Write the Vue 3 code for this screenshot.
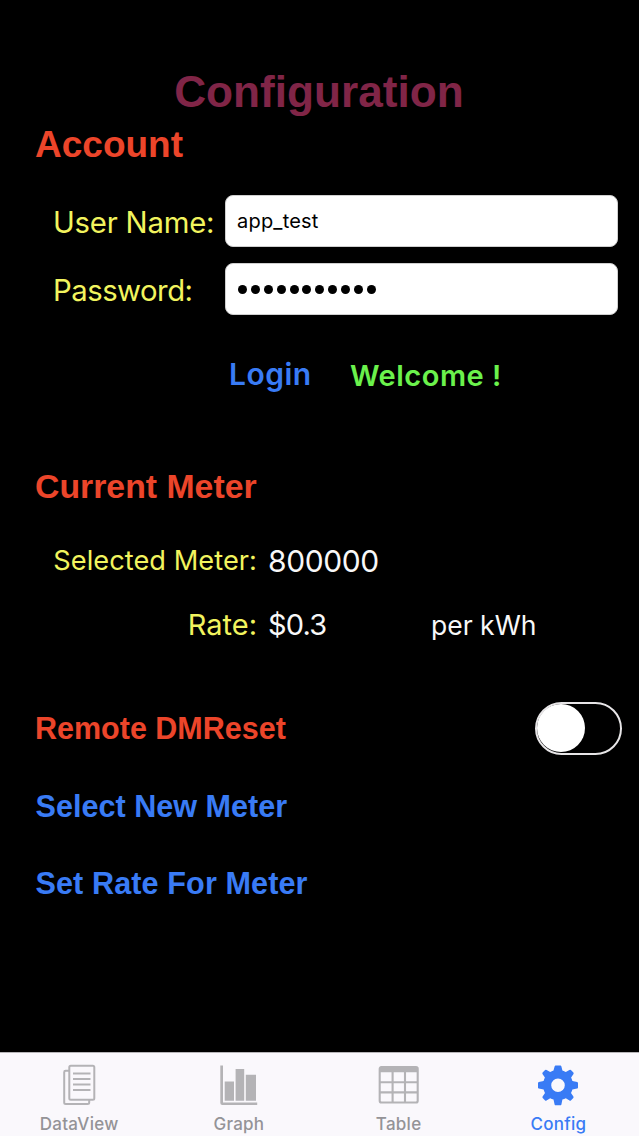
<script setup>
import { ref } from 'vue'

const userName = ref('app_test')
const passwordLength = 11
const remoteReset = ref(false)
const active = ref('Config')
const tabs = ['DataView', 'Graph', 'Table', 'Config']
</script>

<template>
  <div class="screen">
    <main class="content">
      <h1 class="title">Configuration</h1>

      <h2 class="heading account">Account</h2>
      <div class="field-row">
        <span class="label user">User Name:</span>
        <div class="field"><span class="value">{{ userName }}</span></div>
      </div>
      <div class="field-row">
        <span class="label pass">Password:</span>
        <div class="field dots"><i v-for="n in passwordLength" :key="n" class="dot"></i></div>
      </div>
      <div class="login-row">
        <span class="login">Login</span>
        <span class="welcome">Welcome !</span>
      </div>

      <h2 class="heading meter">Current Meter</h2>
      <div class="info-row selected">
        <span class="info-label"><span class="sel-text">Selected Meter:</span></span>
        <span class="number">800000</span>
      </div>
      <div class="info-row rate">
        <span class="info-label"><span class="rate-text">Rate:</span></span>
        <span class="price">$0.3</span>
        <span class="unit">per kWh</span>
      </div>

      <div class="reset-row">
        <h2 class="heading reset">Remote DMReset</h2>
        <div class="switch" :class="{ on: remoteReset }" @click="remoteReset = !remoteReset"><div class="knob"></div></div>
      </div>
      <div class="link select">Select New Meter</div>
      <div class="link set">Set Rate For Meter</div>
    </main>

    <nav class="tabs">
      <div v-for="tab in tabs" :key="tab" class="tab" :class="[{ active: tab === active }, tab.toLowerCase()]" @click="active = tab">
        <svg class="icon" viewBox="0 0 42 42" width="42" height="42">
          <g v-if="tab === 'DataView'" fill="none" stroke="currentColor" stroke-width="2" stroke-linejoin="round">
            <rect x="11.3" y="1.8" width="25" height="34" rx="1.5" />
            <path d="M11 6.8H7.6Q6.2 6.8 6.2 8.2V38.5Q6.2 40 7.7 40H29.5Q31.2 40 31.2 38.5V36M15 9.6H32.5M15 15H32.5M15 20.5H32.5M15 26H32.5" />
          </g>
          <g v-else-if="tab === 'Graph'" fill="currentColor">
            <path d="M2.3 1.5H5V38.6H39.2V41H4.4Q2.3 41 2.3 39Z" />
            <path d="M6.7 17.6H16V36.8H6.7ZM17.6 5H26.2V36.8H17.6ZM27.8 10.8H38V36.8H27.8Z" />
          </g>
          <g v-else-if="tab === 'Table'" fill="none" stroke="currentColor" stroke-width="2.1">
            <rect x="1.7" y="3" width="38" height="35.5" rx="1.8" />
            <path d="M2 5.5H39" stroke-width="5.5" />
            <path d="M1.5 18.3H39.5M1.5 28.4H39.5M14.6 7V38.5M27 7V38.5" />
          </g>
          <path v-else fill="currentColor" fill-rule="evenodd" d="M18.6 1.5H23.4Q24.2 1.5 24.4 2.4L25.4 6.6Q27.2 7.2 28.8 8.1L32.4 5.9Q33.2 5.4 33.9 6L36.4 8.5Q36.9 9.2 36.5 9.9L34.1 13.4Q34.9 15 35.4 16.9L40.2 17.9Q41 18.2 41 19V23.4Q41 24.2 40.2 24.5L35.4 25.6Q34.9 27.4 34 29L36.4 32.6Q36.8 33.3 36.3 34L33.9 36.4Q33.2 37 32.5 36.5L28.8 34.2Q27.2 35.1 25.4 35.6L24.4 40.4Q24.2 41.3 23.4 41.3H18.6Q17.8 41.3 17.6 40.4L16.5 35.6Q14.7 35.1 13.2 34.2L9.5 36.5Q8.8 37 8.1 36.4L5.7 34Q5.2 33.3 5.6 32.6L8 29Q7.1 27.4 6.6 25.6L1.8 24.5Q1 24.2 1 23.4V19Q1 18.2 1.8 17.9L6.6 16.9Q7.1 15 7.9 13.4L5.5 9.9Q5.1 9.2 5.6 8.5L8.1 6Q8.8 5.4 9.6 5.9L13.2 8.1Q14.8 7.2 16.5 6.6L17.6 2.4Q17.8 1.5 18.6 1.5ZM21 14.5A6.8 6.8 0 1 0 21 28.1A6.8 6.8 0 1 0 21 14.5Z" />
        </svg>
        <span class="tab-label">{{ tab }}</span>
      </div>
    </nav>
  </div>
</template>

<style>
body { background: #000; }
</style>

<style scoped>
.screen { width: 639px; height: 1136px; background: #000; display: flex; flex-direction: column; overflow: hidden; font-family: Inter, sans-serif; }
.content { flex: 1; padding-top: 64px; white-space: nowrap; }
h1, h2 { margin: 0; }
.title { height: 56px; text-align: center; font: bold 44.2px/56px "Liberation Sans", sans-serif; color: #802547; padding-right: 1px; }
.heading { margin-left: 35px; font-family: "Liberation Sans", sans-serif; font-weight: bold; color: #ec452a; }
.account { font-size: 37px; line-height: 50px; margin-bottom: 25.4px; }
.field-row { display: flex; height: 52px; line-height: 56px; padding: 0 21px 0 53px; margin-bottom: 16px; }
.label { width: 172px; flex: none; color: #f2f45e; font-size: 29.3px; }
.user { letter-spacing: -0.2px; }
.pass { letter-spacing: -0.5px; }
.field { flex: 1; background: #fff; border: 1px solid #cfcfcf; border-radius: 8px; box-sizing: border-box; line-height: 50px; padding-left: 11px; color: #000; display: flex; align-items: center; }
.value { font-size: 20px; letter-spacing: 0.2px; }
.dots { gap: 3.9px; padding-left: 12px; }
.dot { width: 9px; height: 9px; border-radius: 50%; background: #000; }
.login-row { display: flex; margin-top: 38.6px; padding-left: 229px; height: 40px; line-height: 40px; font-weight: 600; }
.login { width: 121px; color: #397bf5; font-size: 30px; letter-spacing: 0.5px; line-height: 41px; }
.welcome { color: #6bf24c; font-size: 29px; letter-spacing: 0.5px; line-height: 43px; }
.meter { font-size: 33.8px; line-height: 50px; margin-top: 67px; }
.info-row { display: flex; height: 50px; line-height: 50px; color: #f8f8f8; }
.selected { margin-top: 25px; }
.rate { margin-top: 14px; }
.info-label { width: 268px; padding-right: 11px; box-sizing: border-box; text-align: right; color: #f2f45e; flex: none; }
.sel-text { font-size: 27.2px; letter-spacing: 0.05px; }
.rate-text { font-size: 29px; }
.number { font-size: 30px; letter-spacing: -0.4px; }
.price { width: 163px; font-size: 29px; letter-spacing: -0.8px; }
.unit { font-size: 26.5px; }
.reset-row { display: flex; justify-content: space-between; align-items: flex-end; height: 54px; margin-top: 51px; padding-right: 17px; }
.reset { font-size: 30.5px; line-height: 54px; }
.switch { width: 87px; height: 53px; box-sizing: border-box; border: 2.5px solid #e7e5e7; border-radius: 27px; display: flex; }
.switch.on { justify-content: flex-end; background: #6bf24c; }
.knob { width: 48px; height: 48px; border-radius: 50%; background: #fff; }
.link { margin-left: 35.5px; font: bold 30.6px/54px "Liberation Sans", sans-serif; color: #397bf5; }
.select { margin-top: 24px; }
.set { margin-top: 23px; letter-spacing: 0.1px; }
.tabs { flex: none; height: 84px; box-sizing: border-box; border-top: 1px solid #b7b5b8; background: #faf8fc; display: grid; grid-template-columns: repeat(4, 1fr); color: #b4b3b6; }
.tab { display: flex; flex-direction: column; align-items: center; padding: 11px 1.5px 0 0; }
.icon { display: block; flex: none; }
.tab-label { font-size: 17px; line-height: 22px; margin-top: 7px; color: #949397; font-weight: 500; letter-spacing: 0.25px; }
.tab.active, .tab.active .tab-label { color: #397bf5; }
</style>
